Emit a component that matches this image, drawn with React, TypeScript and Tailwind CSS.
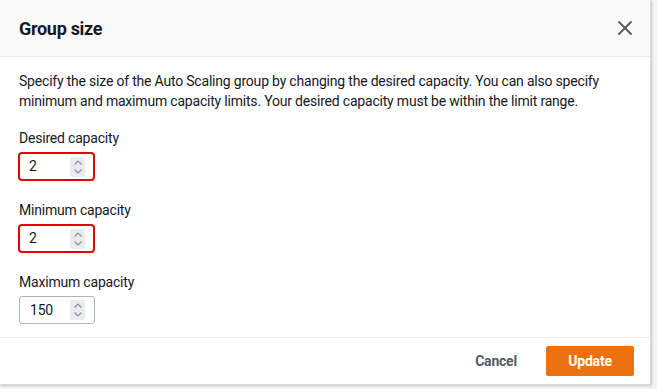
import { useState } from "react";

function Spinner() {
  return (
    <div className="flex h-[20px] w-[20px] flex-col items-center justify-center rounded-[2px] bg-[#e9ebed]">
      <svg width="10" height="16" viewBox="0 0 10 16" fill="none" stroke="#879596" strokeWidth="1.2">
        <path d="M1.5 5.5 L5 2 L8.5 5.5" />
        <path d="M1.5 10.5 L5 14 L8.5 10.5" />
      </svg>
    </div>
  );
}

function CapacityField({
  label,
  value,
  onChange,
  highlight,
}: {
  label: string;
  value: string;
  onChange: (v: string) => void;
  highlight?: boolean;
}) {
  return (
    <div className="flex flex-col">
      <label className="text-[14px] leading-[20px] text-[#16191f]">{label}</label>
      <div
        className={
          highlight
            ? "mt-[4px] flex h-[29px] w-[77px] items-center rounded-[4px] border-2 border-[#e6000b] pl-[9px] pr-[8px] -ml-[1px]"
            : "mt-[4px] flex h-[28px] w-[76px] items-center rounded-[3px] border border-[#aab7b8] pl-[10px] pr-[9px]"
        }
      >
        <input
          className="w-full bg-transparent text-[14px] text-[#16191f] outline-none"
          value={value}
          onChange={(e) => onChange(e.target.value)}
        />
        <Spinner />
      </div>
    </div>
  );
}

export default function App() {
  const [desired, setDesired] = useState("2");
  const [minimum, setMinimum] = useState("2");
  const [maximum, setMaximum] = useState("150");

  return (
    <div className="h-[389px] w-[657px] overflow-hidden bg-[#f2f3f3] font-['Roboto',sans-serif] tracking-[-0.2px]">
      <div className="flex h-[385px] w-[651px] flex-col border-r border-b border-[#d5dbdb] bg-white shadow-[1px_1px_2px_rgba(0,28,36,0.2)]">
        {/* header */}
        <div className="flex h-[57px] items-center justify-between border-b border-[#eaeded] bg-[#fafafa] pl-[19px] pr-[18px]">
          <h2 className="text-[18px] font-bold tracking-[-0.3px] text-[#16191f]">Group size</h2>
          <button className="text-[#545b64]">
            <svg width="14" height="14" viewBox="0 0 14 14" stroke="currentColor" strokeWidth="1.8" strokeLinecap="round">
              <path d="M1 1 L13 13 M13 1 L1 13" />
            </svg>
          </button>
        </div>

        {/* body */}
        <div className="flex flex-1 flex-col px-[19px] pt-[14px]">
          <p className="text-[14px] leading-[20px] text-[#16191f]">
            Specify the size of the Auto Scaling group by changing the desired capacity. You can also specify
            minimum and maximum capacity limits. Your desired capacity must be within the limit range.
          </p>
          <div className="mt-[17px] flex flex-col gap-[19px]">
            <CapacityField label="Desired capacity" value={desired} onChange={setDesired} highlight />
            <CapacityField label="Minimum capacity" value={minimum} onChange={setMinimum} highlight />
            <CapacityField label="Maximum capacity" value={maximum} onChange={setMaximum} />
          </div>
        </div>

        {/* footer */}
        <div className="flex h-[47px] items-center justify-end gap-[29px] border-t border-[#eaeded] pr-[16px]">
          <button className="text-[14px] font-bold text-[#545b64]">Cancel</button>
          <button className="h-[30px] w-[88px] rounded-[2px] bg-[#ec7211] text-[14px] font-bold text-white">
            Update
          </button>
        </div>
      </div>
    </div>
  );
}
